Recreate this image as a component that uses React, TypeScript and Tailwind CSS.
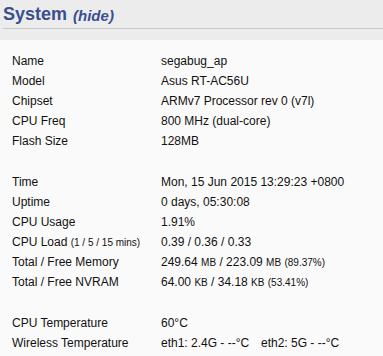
import React from "react";

type Row = { label: React.ReactNode; value: React.ReactNode };

const Small = ({ children }: { children: React.ReactNode }) => (
    <span className="text-[10px]">{children}</span>
);

const groups: Row[][] = [
    [
        { label: "Name", value: "segabug_ap" },
        { label: "Model", value: "Asus RT-AC56U" },
        { label: "Chipset", value: "ARMv7 Processor rev 0 (v7l)" },
        { label: "CPU Freq", value: "800 MHz (dual-core)" },
        { label: "Flash Size", value: "128MB" },
    ],
    [
        { label: "Time", value: "Mon, 15 Jun 2015 13:29:23 +0800" },
        { label: "Uptime", value: "0 days, 05:30:08" },
        { label: "CPU Usage", value: "1.91%" },
        {
            label: <>CPU Load <Small>(1 / 5 / 15 mins)</Small></>,
            value: "0.39 / 0.36 / 0.33",
        },
        {
            label: "Total / Free Memory",
            value: <>249.64 <Small>MB</Small> / 223.09 <Small>MB</Small> <Small>(89.37%)</Small></>,
        },
        {
            label: "Total / Free NVRAM",
            value: <>64.00 <Small>KB</Small> / 34.18 <Small>KB</Small> <Small>(53.41%)</Small></>,
        },
    ],
    [
        { label: "CPU Temperature", value: "60°C" },
        {
            label: "Wireless Temperature",
            value: (
                <>
                    <span className="inline-block w-[100px]">eth1: 2.4G - --°C</span>
                    <span>eth2: 5G - --°C</span>
                </>
            ),
        },
    ],
];

const App = () => {
    return (
        <div className="h-[356px] w-[383px] overflow-hidden bg-[#ececec] font-['Liberation_Sans',Arial,sans-serif]">
            <div className="ml-[3px] flex h-[29px] items-end border-b border-[#c8c8c8] pb-[5px]">
                <span className="text-[18px] font-bold leading-none text-[#3b4f8f]">System</span>
                <span className="ml-[6px] text-[15px] font-bold italic leading-none text-[#3b4f8f]">(hide)</span>
            </div>
            <div className="mt-[11px] h-full bg-[#fafafa] pt-[11px]">
                {groups.map((rows, gi) => (
                    <div key={gi} className={gi > 0 ? "mt-[21px]" : ""}>
                        {rows.map((row, ri) => (
                            <div key={ri} className="flex h-5 items-center text-[12px] text-[#111]">
                                <div className="w-[161px] shrink-0 pl-3">{row.label}</div>
                                <div className="whitespace-nowrap">{row.value}</div>
                            </div>
                        ))}
                    </div>
                ))}
            </div>
        </div>
    );
};

export default App;
